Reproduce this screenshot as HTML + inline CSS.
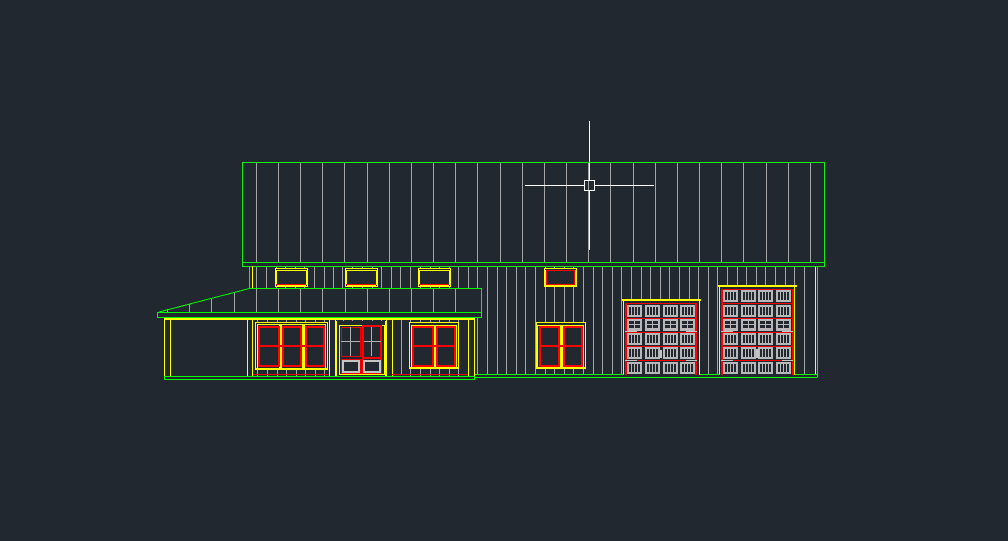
<!DOCTYPE html>
<html>
<head>
<meta charset="utf-8">
<style>
html,body{margin:0;padding:0;background:#212830;width:1008px;height:541px;overflow:hidden}
svg{display:block}
</style>
</head>
<body>
<svg width="1008" height="541" viewBox="0 0 1008 541" shape-rendering="crispEdges" xmlns="http://www.w3.org/2000/svg">
<defs>
<g id="b">
<rect x="0" y="0" width="15" height="12" fill="#b8b8b8"/>
<rect x="2" y="2" width="2" height="8" fill="#212830"/>
<rect x="5" y="2" width="2" height="8" fill="#212830"/>
<rect x="8" y="2" width="2" height="8" fill="#212830"/>
<rect x="11" y="2" width="2" height="8" fill="#212830"/>
</g>
<g id="p">
<rect x="0" y="0" width="15" height="12" fill="#b8b8b8"/>
<rect x="2" y="2" width="5" height="3" fill="#212830"/>
<rect x="8" y="2" width="5" height="3" fill="#212830"/>
<rect x="2" y="6" width="5" height="3" fill="#212830"/>
<rect x="8" y="6" width="5" height="3" fill="#212830"/>
</g>
</defs>
<rect width="1008" height="541" fill="#212830"/>

<!-- roof seams -->
<path stroke="#a5a5a5" fill="none" d="M256.5 162V262M278.5 162V262M300.5 162V262M322.5 162V262M344.5 162V262M367.5 162V262M389.5 162V262M411.5 162V262M433.5 162V262M455.5 162V262M477.5 162V262M500.5 162V262M522.5 162V262M544.5 162V262M566.5 162V262M588.5 162V262M610.5 162V262M633.5 162V262M655.5 162V262M677.5 162V262M699.5 162V262M721.5 162V262M743.5 162V262M766.5 162V262M788.5 162V262M810.5 162V262"/>

<!-- wall siding, upper band left -->
<path stroke="#a5a5a5" fill="none" d="M256.5 266V288M266.5 266V288M276.5 266V288M285.5 266V288M295.5 266V288M304.5 266V288M314.5 266V288M324.5 266V288M333.5 266V288M342.5 266V288M352.5 266V288M362.5 266V288M372.5 266V288M381.5 266V288M391.5 266V288M400.5 266V288M410.5 266V288M420.5 266V288M430.5 266V288M439.5 266V288M449.5 266V288M458.5 266V288M468.5 266V288M477.5 266V288"/>
<!-- wall siding, porch ticks -->
<path stroke="#a5a5a5" fill="none" d="M257.5 319V323M267.5 319V323M277.5 319V323M286.5 319V323M296.5 319V323M305.5 319V323M315.5 319V323M324.5 319V323M343.5 319V323M352.5 319V323M362.5 319V323M372.5 319V323M381.5 319V323M401.5 319V375M410.5 319V323M420.5 319V323M430.5 319V323M439.5 319V323M449.5 319V323M458.5 319V323M257.5 369V376M267.5 369V376M277.5 369V376M286.5 369V376M296.5 369V376M305.5 369V376M315.5 369V376M324.5 369V376M410.5 369V376M420.5 369V376M430.5 369V376M439.5 369V376M449.5 369V376M458.5 369V376"/>
<!-- wall siding, right side -->
<path stroke="#a5a5a5" fill="none" d="M477.5 317V375M487.5 266V375M497.5 266V375M506.5 266V375M516.5 266V375M525.5 266V375M535.5 266V375M545.5 266V375M554.5 266V375M564.5 266V375M573.5 266V375M583.5 266V375M593.5 266V375M602.5 266V375M612.5 266V375M621.5 266V375M631.5 266V300M641.5 266V300M650.5 266V300M660.5 266V300M669.5 266V300M679.5 266V300M689.5 266V300M698.5 266V300M708.5 266V375M717.5 266V375M727.5 266V286M737.5 266V286M746.5 266V286M756.5 266V286M765.5 266V286M775.5 266V286M785.5 266V286M794.5 266V286M804.5 266V375"/>

<!-- porch roof seams -->
<path stroke="#a5a5a5" fill="none" d="M167.5 309V312M189.5 304V312M211.5 298V312M234.5 292V312M256.5 288V312M278.5 288V312M300.5 288V312M322.5 288V312M345.5 288V312M367.5 288V312M389.5 288V312M411.5 288V312M433.5 288V312M455.5 288V312"/>

<!-- roof green -->
<g stroke="#14f014" fill="none">
<rect x="242.5" y="162.5" width="582" height="100"/>
<rect x="242.5" y="262.5" width="582" height="4"/>
</g>

<!-- upper left wall edge -->
<path stroke="#ffff00" fill="none" d="M252.5 266V288M815.5 266V375"/>
<path stroke="#00ff00" fill="none" d="M249.5 266V288M817.5 266V377"/>

<!-- porch roof green -->
<g stroke="#00f800" fill="none">
<path d="M249.5 288.5H481.5V317.5H157.5V312.5H481.5"/>
<path d="M159 312L249.5 288.5"/>
</g>

<!-- porch yellow structure -->
<path stroke="#ffff00" fill="none" d="M164.5 318.5H474.5M164.5 319.5H474.5M164.5 318V376M170.5 319V376M247.5 319V376M252.5 319V376M329.5 319V376M335.5 319V376M386.5 319V376M392.5 319V376M468.5 319V376M474.5 318V376"/>

<!-- red base lines -->
<path stroke="#e00000" fill="none" d="M253 374.5H329M392 374.5H468"/>

<!-- base green -->
<g stroke="#00ff00" fill="none">
<path d="M475 374.5H817.5M475 377.5H817.5"/>
<rect x="164.5" y="376.5" width="310" height="3"/>
</g>

<!-- upper windows -->
<g>
<rect x="275.5" y="268.5" width="32" height="18" fill="#212830" stroke="#ffff00"/>
<rect x="276.5" y="270.5" width="30" height="14" fill="none" stroke="#ffff00"/>
<path d="M276 284.5H306" stroke="#ff0000"/>
<path d="M277 285.5H306" stroke="#ffff00"/>
<rect x="345.5" y="268.5" width="32" height="18" fill="#212830" stroke="#ffff00"/>
<rect x="346.5" y="270.5" width="30" height="14" fill="none" stroke="#ffff00"/>
<path d="M346 284.5H376" stroke="#ff0000"/>
<path d="M347 285.5H376" stroke="#ffff00"/>
<rect x="418.5" y="268.5" width="32" height="18" fill="#212830" stroke="#ffff00"/>
<rect x="419.5" y="270.5" width="30" height="14" fill="none" stroke="#ffff00"/>
<path d="M419 284.5H449" stroke="#ff0000"/>
<path d="M420 285.5H449" stroke="#ffff00"/>
<rect x="544.5" y="268.5" width="32" height="18" fill="#212830" stroke="#ffff00"/>
<rect x="545" y="270" width="31" height="16" fill="#ffff00"/>
<rect x="546" y="270" width="29" height="15" fill="#ff0000"/>
<rect x="547" y="271" width="27" height="13" fill="#212830"/>
</g>

<!-- window A -->
<g>
<rect x="255.5" y="322.5" width="72" height="47" fill="#212830" stroke="#ffff00"/>
<rect x="257.5" y="324.5" width="68" height="44" fill="none" stroke="#ffff00"/>
<rect x="255" y="368" width="73" height="2" fill="#ffff00"/>
<rect x="279" y="325" width="3" height="43" fill="#ffff00"/>
<rect x="302" y="325" width="3" height="43" fill="#ffff00"/>
<path d="M259 327H279V366H259ZM283 327H301V366H283ZM306 327H324V366H306Z" fill="none" stroke="#ff0000" stroke-width="2"/>
<path d="M259 346H324" stroke="#ff0000" stroke-width="2" fill="none"/>
</g>

<!-- door -->
<g>
<rect x="336" y="321" width="50" height="53" fill="#212830"/>
<path d="M336 321V376M386 321V376" stroke="#ffff00" stroke-width="2" fill="none"/>
<rect x="339.5" y="325.5" width="45" height="49" fill="none" stroke="#ffff00"/>
<rect x="341.5" y="327.5" width="19" height="29" fill="none" stroke="#f00000"/>
<rect x="341.5" y="359.5" width="19" height="14" fill="none" stroke="#f00000"/>
<rect x="363" y="326" width="18" height="47" fill="none" stroke="#ff0000" stroke-width="2"/>
<path d="M362 358H381" stroke="#ff0000" stroke-width="2" fill="none"/>
<path d="M350.5 327V356M341 341.5H360M371.5 327V356M364 341.5H381" stroke="#b0b0b0" fill="none"/>
<rect x="343" y="361" width="16" height="11" fill="none" stroke="#c4c4c4" stroke-width="2"/>
<rect x="364" y="361" width="16" height="11" fill="none" stroke="#c4c4c4" stroke-width="2"/>
</g>

<!-- window B -->
<g>
<rect x="409.5" y="322.5" width="49" height="46" fill="#212830" stroke="#ffff00"/>
<rect x="411.5" y="325.5" width="45" height="43" fill="none" stroke="#ffff00"/>
<rect x="409" y="367" width="50" height="2" fill="#ffff00"/>
<rect x="433" y="325" width="3" height="42" fill="#ffff00"/>
<path d="M413 327H433V366H413ZM437 327H455V366H437Z" fill="none" stroke="#ff0000" stroke-width="2"/>
<path d="M413 346H455" stroke="#ff0000" stroke-width="2" fill="none"/>
</g>

<!-- window C -->
<g>
<rect x="536.5" y="322.5" width="49" height="46" fill="#212830" stroke="#ffff00"/>
<rect x="537.5" y="325.5" width="46" height="43" fill="none" stroke="#ffff00"/>
<rect x="536" y="367" width="50" height="2" fill="#ffff00"/>
<rect x="560" y="325" width="3" height="42" fill="#ffff00"/>
<path d="M540 327H559V366H540ZM564 327H582V366H564Z" fill="none" stroke="#ff0000" stroke-width="2"/>
<path d="M540 346H582" stroke="#ff0000" stroke-width="2" fill="none"/>
</g>

<!-- garage door 1 -->
<g>
<rect x="623" y="300" width="77" height="75" fill="#212830"/>
<rect x="622" y="299" width="79" height="2" fill="#ffff00"/>
<path d="M623.5 301V375M699.5 301V375" stroke="#ffff00" fill="none"/>
<use href="#b" x="627" y="305"/><use href="#b" x="645" y="305"/><use href="#b" x="663" y="305"/><use href="#b" x="680" y="305"/>
<use href="#p" x="627" y="319"/><use href="#p" x="645" y="319"/><use href="#p" x="663" y="319"/><use href="#p" x="680" y="319"/>
<use href="#b" x="627" y="333"/><use href="#b" x="645" y="333"/><use href="#b" x="663" y="333"/><use href="#b" x="680" y="333"/>
<use href="#b" x="627" y="347"/><use href="#b" x="645" y="347"/><use href="#b" x="663" y="347"/><use href="#b" x="680" y="347"/>
<use href="#b" x="627" y="362"/><use href="#b" x="645" y="362"/><use href="#b" x="663" y="362"/><use href="#b" x="680" y="362"/>
<path d="M626 303V375M696 303V375" stroke="#ff0000" stroke-width="2" fill="none"/>
<path d="M625 303.5H697M625 318.5H697M625 332.5H697M625 346.5H697M625 360.5H697" stroke="#f00000" fill="none"/>
<path d="M625 331.5H637M686 331.5H697M625 360.5H637M686 360.5H697" stroke="#c4c4c4" fill="none"/>
<rect x="660" y="350" width="2" height="8" fill="#c4c4c4"/>
</g>

<!-- garage door 2 -->
<g>
<rect x="719" y="286" width="76" height="89" fill="#212830"/>
<rect x="718" y="285" width="79" height="2" fill="#ffff00"/>
<path d="M719.5 287V375M794.5 287V375" stroke="#ffff00" fill="none"/>
<use href="#b" x="723" y="290"/><use href="#b" x="741" y="290"/><use href="#b" x="758" y="290"/><use href="#b" x="776" y="290"/>
<use href="#b" x="723" y="305"/><use href="#b" x="741" y="305"/><use href="#b" x="758" y="305"/><use href="#b" x="776" y="305"/>
<use href="#p" x="723" y="319"/><use href="#p" x="741" y="319"/><use href="#p" x="758" y="319"/><use href="#p" x="776" y="319"/>
<use href="#b" x="723" y="333"/><use href="#b" x="741" y="333"/><use href="#b" x="758" y="333"/><use href="#b" x="776" y="333"/>
<use href="#b" x="723" y="347"/><use href="#b" x="741" y="347"/><use href="#b" x="758" y="347"/><use href="#b" x="776" y="347"/>
<use href="#b" x="723" y="362"/><use href="#b" x="741" y="362"/><use href="#b" x="758" y="362"/><use href="#b" x="776" y="362"/>
<path d="M722 289V375M793 289V375" stroke="#ff0000" stroke-width="2" fill="none"/>
<path d="M721 289.5H793M721 303.5H793M721 318.5H793M721 332.5H793M721 346.5H793M721 360.5H793" stroke="#f00000" fill="none"/>
<path d="M721 331.5H733M782 331.5H793M721 360.5H733M782 360.5H793" stroke="#c4c4c4" fill="none"/>
<rect x="756" y="349" width="3" height="9" fill="#c4c4c4"/>
</g>

<!-- crosshair -->
<g stroke="#ffffff" fill="none">
<path d="M589.5 121V180M589.5 190V250M525 185.5H584M594 185.5H654"/>
<rect x="584.5" y="180.5" width="10" height="10"/>
</g>
</svg>
</body>
</html>
